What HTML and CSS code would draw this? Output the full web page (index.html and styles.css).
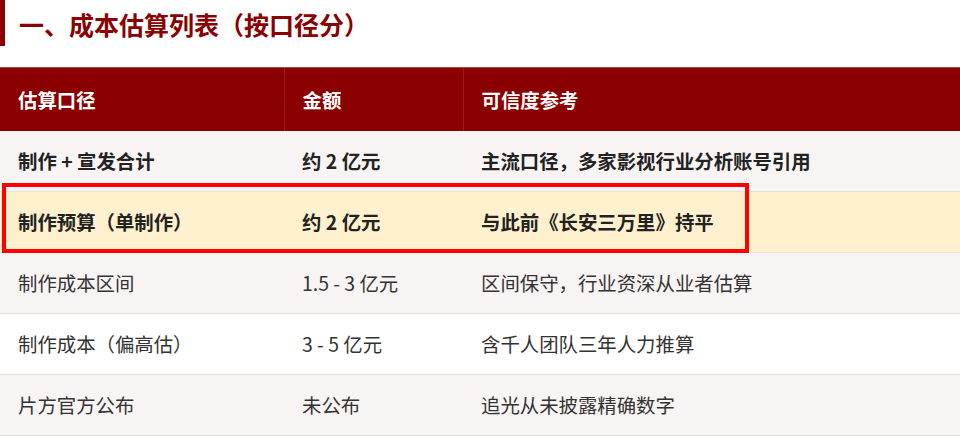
FILE: index.html
```html
<!DOCTYPE html>
<html lang="zh-CN">
<head>
<meta charset="utf-8">
<link rel="stylesheet" href="styles.css">
</head>
<body>
<h2 class="section-title">一、成本估算列表（按口径分）</h2>
<div class="table-wrap">
  <table class="cost-table">
    <colgroup>
      <col class="c1"><col class="c2"><col class="c3">
    </colgroup>
    <thead>
      <tr><th>估算口径</th><th>金额</th><th>可信度参考</th></tr>
    </thead>
    <tbody>
      <tr class="bold"><td>制作 + 宣发合计</td><td>约 2 亿元</td><td>主流口径，多家影视行业分析账号引用</td></tr>
      <tr class="bold hl"><td>制作预算（单制作）</td><td>约 2 亿元</td><td>与此前《长安三万里》持平</td></tr>
      <tr><td>制作成本区间</td><td>1.5 - 3 亿元</td><td>区间保守，行业资深从业者估算</td></tr>
      <tr><td>制作成本（偏高估）</td><td>3 - 5 亿元</td><td>含千人团队三年人力推算</td></tr>
      <tr><td>片方官方公布</td><td>未公布</td><td>追光从未披露精确数字</td></tr>
    </tbody>
  </table>
  <div class="mark-box"></div>
</div>
</body>
</html>
```

FILE: styles.css
```css
html, body {
  margin: 0;
  padding: 0;
  background: #ffffff;
}
body {
  font-family: "Noto Sans CJK SC", "Noto Sans", sans-serif;
  color: #333333;
  overflow: hidden;
}
.section-title {
  margin: 0;
  height: 46px;
  box-sizing: border-box;
  border-left: 5px solid #8b0000;
  padding-left: 14px;
  font-size: 25px;
  font-weight: 700;
  line-height: 48px;
  color: #8b0000;
}
.table-wrap {
  position: relative;
  margin-top: 21px;
}
.cost-table {
  width: 960px;
  border-collapse: collapse;
  table-layout: fixed;
  font-size: 19.4px;
}
.c1 { width: 284px; }
.c2 { width: 179px; }
.c3 { width: 497px; }
.cost-table th {
  background: #8b0000;
  color: #ffffff;
  font-weight: 700;
  text-align: left;
  padding: 17px 18px;
  line-height: 29px;
  border-top: 1px solid #a84a4a;
  border-left: 1px solid #9a1a1a;
}
.cost-table th:first-child { border-left: none; padding-top: 16px; }
.cost-table td {
  padding: 16px 18px;
  line-height: 28px;
  border-bottom: 1px solid #e6e2e0;
  white-space: nowrap;
}
.cost-table tbody tr:nth-child(odd) td { background: #f8f4f3; }
.cost-table tbody tr:nth-child(even) td { background: #ffffff; }
.cost-table tbody tr.hl td { background: #fff1cd; border-top: 1px solid #e6e2dc; }
.cost-table tr.bold td {
  font-weight: 700;
  color: #222222;
}
.mark-box {
  position: absolute;
  left: 2px;
  top: 116px;
  width: 747px;
  height: 70px;
  box-sizing: border-box;
  border: 4px solid #ff0000;
  pointer-events: none;
}
```
